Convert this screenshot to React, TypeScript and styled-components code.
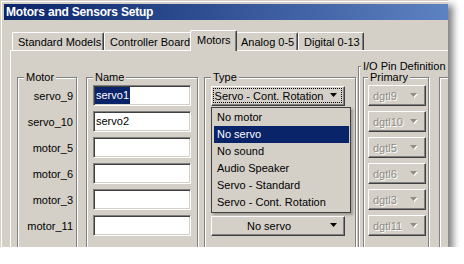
import styled, { createGlobalStyle } from "styled-components";

const face = "#d4d0c8";
const shade = "#808080";
const dark = "#404040";
const navy = "#0a246a";

const GlobalStyle = createGlobalStyle`
  html, body {
    margin: 0;
    padding: 0;
    background: #fff;
  }
  body {
    font-family: "Liberation Sans", Arial, sans-serif;
    font-size: 11px;
    color: #000;
  }
`;

const Window = styled.div`
  width: 448px;
  height: 247px;
  box-sizing: border-box;
  overflow: hidden;
  background: ${face};
  padding: 3px 0 0 3px;
  border-top: 1px solid ${face};
  border-left: 1px solid ${face};
  box-shadow: inset 1px 1px 0 #fff, 5px 5px 7px rgba(0, 0, 0, 0.5);
`;

const TitleBar = styled.div`
  height: 16px;
  padding-left: 2px;
  background: linear-gradient(to right, ${navy}, #5d82c2);
  color: #fff;
  font-weight: bold;
  font-size: 12px;
  letter-spacing: -0.2px;
  line-height: 16px;
  white-space: nowrap;
`;

const Body = styled.div`
  padding: 10px 0 0 6px;
`;

const TabStrip = styled.div`
  display: flex;
  align-items: flex-end;
  height: 20px;
  padding-left: 2px;
`;

const Tab = styled.div<{ $w: number; $active?: boolean }>`
  position: relative;
  z-index: ${({ $active }) => ($active ? 2 : 1)};
  flex-shrink: 0;
  box-sizing: border-box;
  width: ${({ $w }) => $w}px;
  height: ${({ $active }) => ($active ? 21 : 18)}px;
  margin: ${({ $active }) => ($active ? "0 -2px -1px" : "0")};
  padding: 0 0 ${({ $active }) => ($active ? 2 : 0)}px
    ${({ $active }) => ($active ? 6 : 5)}px;
  display: flex;
  align-items: center;
  background: ${face};
  border-top: 1px solid #fff;
  border-left: 1px solid #fff;
  border-right: 1px solid ${dark};
  border-radius: 2px 2px 0 0;
  box-shadow: inset -1px 0 0 ${shade};
  white-space: nowrap;
`;

const Panel = styled.div`
  height: 240px;
  border-top: 1px solid #fff;
  border-left: 1px solid #fff;
`;

const Columns = styled.div`
  display: flex;
  align-items: flex-start;
  padding-left: 6px;
`;

const Group = styled.fieldset<{ $w: number; $top: number; $ml?: number }>`
  flex-shrink: 0;
  box-sizing: border-box;
  width: ${({ $w }) => $w}px;
  height: 220px;
  min-width: 0;
  margin: ${({ $top }) => $top}px 0 0 ${({ $ml }) => $ml ?? 0}px;
  padding: 0;
  border: 1px solid ${shade};
  box-shadow: inset 1px 1px 0 #fff, 1px 1px 0 #fff;
`;

const Legend = styled.legend<{ $ml?: number }>`
  margin-left: ${({ $ml }) => $ml ?? 6}px;
  padding: 0 2px;
  line-height: 13px;
  background: ${face};
  white-space: nowrap;
`;

const Rows = styled.div<{ $pl?: number; $pr?: number }>`
  display: flex;
  flex-direction: column;
  gap: 5px;
  padding: 1px ${({ $pr }) => $pr ?? 0}px 0 ${({ $pl }) => $pl ?? 0}px;
`;

const Row = styled.div<{ $end?: boolean }>`
  position: relative;
  height: 21px;
  display: flex;
  align-items: center;
  justify-content: ${({ $end }) => ($end ? "flex-end" : "flex-start")};
`;

const NestedGroups = styled.div`
  display: flex;
  align-items: flex-start;
  padding-left: 4px;
`;

const TextBox = styled.div`
  box-sizing: border-box;
  width: 98px;
  height: 21px;
  display: flex;
  padding-left: 1px;
  background: #fff;
  border-top: 1px solid ${shade};
  border-left: 1px solid ${shade};
  border-right: 1px solid #fff;
  border-bottom: 1px solid #fff;
  box-shadow: inset 1px 1px 0 ${dark}, inset -1px -1px 0 ${face};
  line-height: 17px;
  white-space: nowrap;
`;

const TextValue = styled.span<{ $selected?: boolean }>`
  margin-top: 1px;
  padding: 0 1px;
  height: 17px;
  background: ${({ $selected }) => ($selected ? navy : "transparent")};
  color: ${({ $selected }) => ($selected ? "#fff" : "#000")};
`;

const ComboButton = styled.div<{
  $w: number;
  $h: number;
  $focus?: boolean;
  $covered?: boolean;
}>`
  position: relative;
  box-sizing: border-box;
  width: ${({ $w }) => $w}px;
  height: ${({ $h }) => $h}px;
  display: flex;
  align-items: center;
  visibility: ${({ $covered }) => ($covered ? "hidden" : "visible")};
  background: ${face};
  border-top: 1px solid #fff;
  border-left: 1px solid #fff;
  border-right: 1px solid ${dark};
  border-bottom: 1px solid ${dark};
  box-shadow: inset -1px -1px 0 ${shade};
  white-space: nowrap;

  &::after {
    content: "";
    display: ${({ $focus }) => ($focus ? "block" : "none")};
    position: absolute;
    inset: 1px 2px 2px 1px;
    border: 1px dotted #000;
  }
`;

const ComboText = styled.span<{ $disabled?: boolean; $left?: boolean }>`
  flex: 1;
  padding-left: ${({ $left }) => ($left ? 4 : 0)}px;
  text-align: ${({ $left }) => ($left ? "left" : "center")};
  color: ${({ $disabled }) => ($disabled ? "#8f8c86" : "#000")};
  text-shadow: ${({ $disabled }) => ($disabled ? "1px 1px 0 #fff" : "none")};
`;

const ArrowBox = styled.span<{ $mr: number }>`
  display: flex;
  margin: 0 ${({ $mr }) => $mr}px 0 4px;
`;

const DropList = styled.div`
  position: absolute;
  z-index: 5;
  top: 22px;
  left: 0;
  box-sizing: border-box;
  width: 140px;
  padding: 1px 1px 1px 2px;
  background: ${face};
  border: 1px solid ${dark};
  box-shadow: 2px 2px 2px rgba(0, 0, 0, 0.25);
`;

const DropItem = styled.div<{ $selected?: boolean }>`
  height: 17px;
  line-height: 17px;
  padding-left: 3px;
  white-space: nowrap;
  background: ${({ $selected }) => ($selected ? navy : "transparent")};
  color: ${({ $selected }) => ($selected ? "#fff" : "#000")};
`;

function Arrow({ disabled }: { disabled?: boolean }) {
  return (
    <svg width="8" height="5" viewBox="0 0 8 5">
      {disabled && <polygon points="1,1 8,1 4.5,5" fill="#fff" />}
      <polygon points="0,0 7,0 3.5,4" fill={disabled ? "#8f8c86" : "#000"} />
    </svg>
  );
}

const motors = [
  { label: "servo_9", name: "servo1", type: "Servo - Cont. Rotation", pin: "dgtl9" },
  { label: "servo_10", name: "servo2", type: "No servo", pin: "dgtl10" },
  { label: "motor_5", name: "", type: "No motor", pin: "dgtl5" },
  { label: "motor_6", name: "", type: "No motor", pin: "dgtl6" },
  { label: "motor_3", name: "", type: "No motor", pin: "dgtl3" },
  { label: "motor_11", name: "", type: "No servo", pin: "dgtl11" },
];

const typeOptions = [
  "No motor",
  "No servo",
  "No sound",
  "Audio Speaker",
  "Servo - Standard",
  "Servo - Cont. Rotation",
];

const tabs = [
  { label: "Standard Models", w: 92 },
  { label: "Controller Board", w: 88 },
  { label: "Motors", w: 47, active: true },
  { label: "Analog 0-5", w: 63 },
  { label: "Digital 0-13", w: 66 },
];

// the open list of the first combo lies over rows 2-5 of the Type column
const isCovered = (i: number) => i > 0 && i < motors.length - 1;

export default function App() {
  return (
    <>
      <GlobalStyle />
      <Window>
        <TitleBar>Motors and Sensors Setup</TitleBar>
        <Body>
          <TabStrip>
            {tabs.map((t) => (
              <Tab key={t.label} $w={t.w} $active={t.active}>
                {t.label}
              </Tab>
            ))}
          </TabStrip>
          <Panel>
            <Columns>
              <Group $w={60} $top={20}>
                <Legend>Motor</Legend>
                <Rows $pr={3}>
                  {motors.map((m) => (
                    <Row key={m.label} $end>
                      {m.label}
                    </Row>
                  ))}
                </Rows>
              </Group>

              <Group $w={112} $top={20} $ml={9}>
                <Legend>Name</Legend>
                <Rows $pl={6}>
                  {motors.map((m, i) => (
                    <Row key={m.label}>
                      <TextBox>
                        {m.name && <TextValue $selected={i === 0}>{m.name}</TextValue>}
                      </TextBox>
                    </Row>
                  ))}
                </Rows>
              </Group>

              <Group $w={152} $top={20} $ml={6}>
                <Legend>Type</Legend>
                <Rows $pl={6}>
                  {motors.map((m, i) => (
                    <Row key={m.label}>
                      <ComboButton $w={134} $h={20} $focus={i === 0} $covered={isCovered(i)}>
                        <ComboText>{m.type}</ComboText>
                        <ArrowBox $mr={6}>
                          <Arrow />
                        </ArrowBox>
                      </ComboButton>
                      {i === 0 && (
                        <DropList>
                          {typeOptions.map((o) => (
                            <DropItem key={o} $selected={o === "No servo"}>
                              {o}
                            </DropItem>
                          ))}
                        </DropList>
                      )}
                    </Row>
                  ))}
                </Rows>
              </Group>

              <Group $w={120} $top={9} $ml={2}>
                <Legend $ml={2}>I/O Pin Definition</Legend>
                <NestedGroups>
                  <Group $w={66} $top={-2}>
                    <Legend $ml={4}>Primary</Legend>
                    <Rows $pl={4}>
                      {motors.map((m) => (
                        <Row key={m.pin}>
                          <ComboButton $w={58} $h={21}>
                            <ComboText $disabled $left>
                              {m.pin}
                            </ComboText>
                            <ArrowBox $mr={7}>
                              <Arrow disabled />
                            </ArrowBox>
                          </ComboButton>
                        </Row>
                      ))}
                    </Rows>
                  </Group>
                  <Group $w={60} $top={4} $ml={10} />
                </NestedGroups>
              </Group>
            </Columns>
          </Panel>
        </Body>
      </Window>
    </>
  );
}
